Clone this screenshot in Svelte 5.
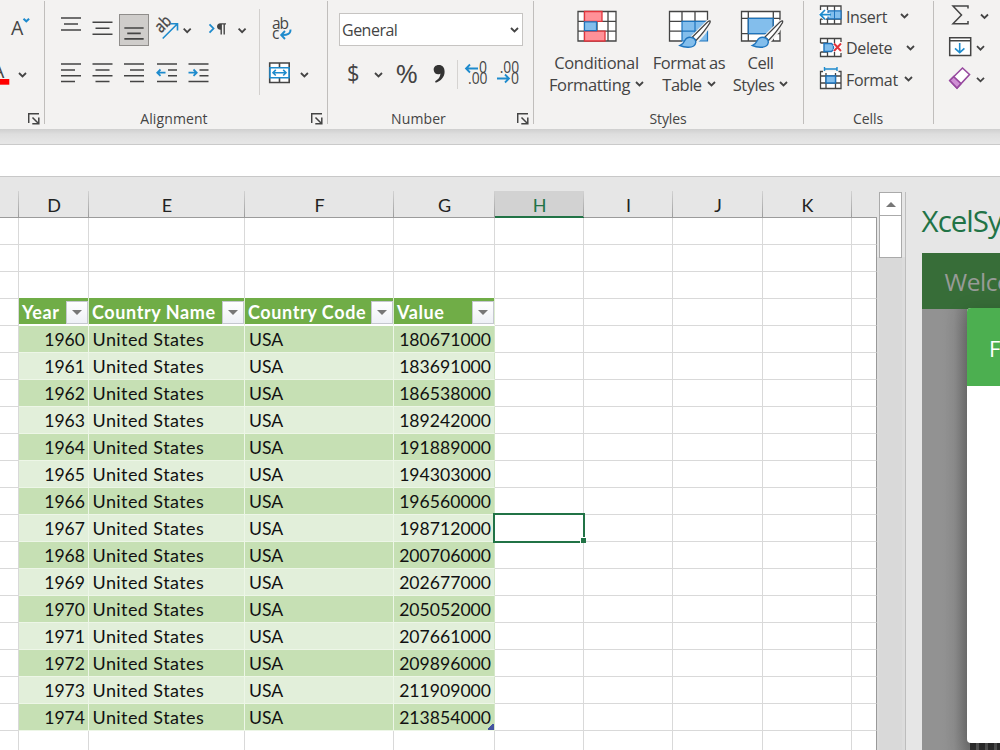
<script>
  const columns = [
    { name: '', w: 19 },
    { name: 'D', w: 70 },
    { name: 'E', w: 156 },
    { name: 'F', w: 149 },
    { name: 'G', w: 101 },
    { name: 'H', w: 89, active: true },
    { name: 'I', w: 89 },
    { name: 'J', w: 90 },
    { name: 'K', w: 89 },
    { name: '', w: 25 }
  ];
  const template = columns.map((c) => c.w + 'px').join(' ');
  const fields = ['Year', 'Country Name', 'Country Code', 'Value'];
  const values = [
    180671000, 183691000, 186538000, 189242000, 191889000, 194303000, 196560000, 198712000,
    200706000, 202677000, 205052000, 207661000, 209896000, 211909000, 213854000
  ];
  const records = values.map((value, i) => ({ year: 1960 + i, value }));
  const blank = [0, 1, 2];
  const tail = [5, 6, 7, 8, 9];
</script>

{#snippet chevron()}
  <svg class="chev" viewBox="0 0 9 6" width="9" height="6"><path d="M1 1 4.500 4.500 8 1" /></svg>
{/snippet}

{#snippet launcher()}
  <svg class="launch" viewBox="28 113 12 12" width="12" height="12">
    <path d="M28.7 123v-9.3H39M32.5 117.5l6 6M38.8 117.5v6.3h-6.5" />
  </svg>
{/snippet}

{#snippet brush()}
  <path d="M693.500 37.500 709 22q3-2 2.200.8Q707 31 697.500 41Z" fill="#fff" stroke="#f3f2f1" stroke-width="4" />
  <path d="M693.500 37 708.500 22q3.500-2.500 2.500.6Q706 31 697 40.500Z" fill="#fff" stroke="#444" stroke-width="1.200" />
  <path d="M681 45.500q3-1 4.500-4.500 2.500-4.500 7-3.500 4.500 1 4.300 5-.8 5-8 4.800-4.500-.3-7.800-1.800Z" fill="#83beec" stroke="#1e74bd" stroke-width="1.400" />
{/snippet}

<div class="app">
  <header class="ribbon">
    <section class="group font">
      <div class="body">
        <svg viewBox="0 8 44 40" width="44" height="40">
          <text x="11" y="35" font-size="19.500">A</text>
          <path class="blue" stroke-width="2" d="m23.500 18.700 2.800 2.600 2.800-2.600" />
        </svg>
        <svg viewBox="0 48 44 48" width="44" height="48">
          <text x="-8" y="78" font-size="19.500">A</text>
          <rect x="0" y="79" width="9.300" height="5.700" fill="#f00" />
          <path class="chevp" d="m19 73 3.500 3.500 3.500-3.500" />
        </svg>
      </div>
      <footer><span></span>{@render launcher()}</footer>
    </section>

    <section class="group align">
      <div class="body split">
        <div class="tools">
          <div class="line">
            <svg viewBox="55 8 32 40" width="32" height="40"><path class="ink" d="M61 18h20M64 24h14M61 30h20" /></svg>
            <svg viewBox="87 8 32 40" width="32" height="40"><path class="ink" d="M92.500 22.300h20M95.500 28.300h14M92.500 34.300h20" /></svg>
            <svg class="pressed" viewBox="119.500 15 29 31" width="31" height="33"><path class="ink" d="M124 28.500h20M127 34h14M124 39.700h20" /></svg>
            <svg viewBox="150 8 50 40" width="50" height="40">
              <text class="firm" x="0" y="0" font-size="16.500" transform="translate(161 33.500) rotate(-45)" textLength="16" lengthAdjust="spacingAndGlyphs">ab</text>
              <path class="blue" stroke-width="1.600" d="m162.700 38.500 14.500-14.500M170.800 23.800h6.700v6.700" />
              <path class="chevp" d="m183.700 28.700 3.500 3.500 3.500-3.500" />
            </svg>
            <svg viewBox="200 8 55 40" width="55" height="40">
              <path class="blue" stroke-width="1.800" d="m209.500 24.300 4 4.200-4 4.200" />
              <path d="M226 23.300h-5.500q-3.500.3-3.500 3.200t3.500 3.300v4.700h1.400V24.600h1.600v9.900h1.400v-9.900h1.100Z" fill="#444" />
              <path class="chevp" d="m238.600 28.700 3.500 3.500 3.500-3.500" />
            </svg>
          </div>
          <div class="line low">
            <svg viewBox="55 48 32 48" width="32" height="48"><path class="ink" d="M61 64h20M61 70h14M61 75.800h20M61 81.500h14" /></svg>
            <svg viewBox="87 48 32 48" width="32" height="48"><path class="ink" d="M92.500 64h20M95.500 70h14M92.500 75.800h20M95.500 81.500h14" /></svg>
            <svg viewBox="119 48 32 48" width="32" height="48"><path class="ink" d="M124 64h20M130 70h14M124 75.800h20M130 81.500h14" /></svg>
            <svg viewBox="151 48 32 48" width="32" height="48">
              <path class="ink" d="M157 64h20M168 70h9M168 75.800h9M157 81.500h20" />
              <path class="blue" stroke-width="1.800" d="M165.500 72.700h-8M160.500 69.500l-3.200 3.200 3.200 3.200" />
            </svg>
            <svg viewBox="183 48 32 48" width="32" height="48">
              <path class="ink" d="M188.500 64h20M199.500 70h9M199.500 75.800h9M188.500 81.500h20" />
              <path class="blue" stroke-width="1.800" d="M188.500 72.700h8M193.500 69.500l3.200 3.200-3.200 3.200" />
            </svg>
          </div>
        </div>
        <div class="rule"></div>
        <div class="tools">
          <svg viewBox="260 8 60 40" width="60" height="40">
            <text x="272" y="28.500" font-size="15.500" textLength="17">ab</text>
            <text x="272" y="38.500" font-size="15.500">c</text>
            <path class="blue" stroke-width="1.900" d="M290.500 29.500q.3 6-9 5.500M285 31l-3.800 4 3.800 4" />
          </svg>
          <svg viewBox="260 48 60 48" width="60" height="48">
            <path d="M269.700 63h19.500v19.500h-19.500ZM279.500 63v5M279.500 78v5" fill="#fff" stroke="#444" stroke-width="1.600" />
            <path d="M270 67.700h19v10h-19Z" fill="#fff" stroke="#1e8bcd" stroke-width="1.600" />
            <path class="blue" stroke-width="1.600" d="M273 72.700h13M275.800 69.900l-2.800 2.800 2.800 2.800M283.200 69.900l2.800 2.800-2.800 2.800" />
            <path class="chevp" d="m300.900 73 3.500 3.500 3.500-3.500" />
          </svg>
        </div>
      </div>
      <footer><span>Alignment</span>{@render launcher()}</footer>
    </section>

    <section class="group number">
      <div class="body">
        <div class="select"><span>General</span>{@render chevron()}</div>
        <svg viewBox="328 48 204 48" width="204" height="48">
          <text x="347" y="81.500" font-size="24" textLength="12.500" lengthAdjust="spacingAndGlyphs">$</text>
          <path class="chevp" d="m375 73 3.500 3.500 3.500-3.500" />
          <text x="395.500" y="82.500" font-size="25.500" textLength="22.500" lengthAdjust="spacingAndGlyphs">%</text>
          <path d="M438.900 65c-3.600 0-5.400 2.300-5.200 5 .2 3 2.600 4.600 5.200 4.200.9-.1 1.300-.3 1.600-.6-.2 3.600-2.400 6.300-5.400 7.600l.6 1.500c5.200-1.600 8.900-5.800 8.900-11 0-4.300-2.200-6.700-5.700-6.700Z" fill="#333" />
          <path d="M457.500 60v29" stroke="#d5d3d1" fill="none" />
          <text x="479" y="72.800" font-size="15.500" textLength="8" lengthAdjust="spacingAndGlyphs">0</text>
          <text x="468" y="83.500" font-size="15.500" textLength="19.500" lengthAdjust="spacingAndGlyphs">.00</text>
          <path class="blue" stroke-width="1.800" d="M478 68.500h-12M470 64.500l-4 4 4 4" />
          <text x="499.700" y="72.800" font-size="15.500" textLength="19.500" lengthAdjust="spacingAndGlyphs">.00</text>
          <text x="511" y="83.500" font-size="15.500" textLength="8" lengthAdjust="spacingAndGlyphs">0</text>
          <path class="blue" stroke-width="1.800" d="M497 78.500h12M505 74.500l4 4-4 4" />
        </svg>
      </div>
      <footer><span>Number</span>{@render launcher()}</footer>
    </section>

    <section class="group styles">
      <div class="body bigs">
        <div class="big" style:width="111px">
          <svg viewBox="572.500 8 50 42" width="50" height="42">
            <path d="M578.500 11.500h38v29.500h-38Z" fill="#fff" />
            <path class="grid" d="M578.500 11.500h38v29.500h-38ZM578.500 21.300h38M578.500 31.200h38M585 11v30M597.500 11v30M608.500 11v30" />
            <path d="M585 11.500h17.500v9.800H585ZM585 31.200h20.500v9.800h-20.500Z" fill="#ff9198" stroke="#e0343c" stroke-width="1.300" />
            <path d="M585 21.900h12v8.700h-12Z" fill="#83beec" stroke="#1e74bd" stroke-width="1.200" />
          </svg>
          <b style:letter-spacing="-.32px">Conditional</b>
          <b style:letter-spacing="-.35px">Formatting {@render chevron()}</b>
        </div>
        <div class="big" style:width="74px">
          <svg viewBox="665 8 50 42" width="50" height="42">
            <path d="M670.500 11.500h38v29.500h-38Z" fill="#fff" />
            <path d="M683 21.300h25.500v19.700H683Z" fill="#83beec" />
            <path class="grid" d="M708.500 21V11.500h-38v29.500H683M670.500 21.300h38M670.500 31.200h13M683 11v11M696 11v11" />
            <path d="M683 41V21.300h25.500V41ZM683 31.200h25M696 21v20" fill="none" stroke="#1e74bd" stroke-width="1.200" />
            {@render brush()}
          </svg>
          <b style:letter-spacing="-.5px">Format as</b>
          <b style:letter-spacing="-.5px">Table {@render chevron()}</b>
        </div>
        <div class="big" style:width="69px">
          <svg viewBox="736 8 50 42" width="50" height="42">
            <path d="M741.500 11.500h38.500v29.500h-38.500Z" fill="#fff" />
            <path d="M748.300 18.300h25v15.400h-25Z" fill="#83beec" />
            <path class="grid" d="M741.500 11.500H780v29.500h-38.500ZM741.500 18.300H780M741.500 33.700H780M748.300 11v30M773.300 11v30" />
            <path d="M748.300 18.300h25v15.400h-25Z" fill="none" stroke="#1e74bd" stroke-width="1.200" />
            <g transform="translate(71.500 0)">{@render brush()}</g>
          </svg>
          <b style:letter-spacing="-.5px">Cell</b>
          <b style:letter-spacing="-.5px">Styles {@render chevron()}</b>
        </div>
      </div>
      <footer><span>Styles</span></footer>
    </section>

    <section class="group cells">
      <div class="body rows">
        <div class="item">
          <svg viewBox="819 3 24 26" width="24" height="26">
            <path d="M820.500 6H841v18h-20.500Z" fill="#fff" />
            <path class="grid" d="M820.500 10V6H841v18h-20.500v-5M827.500 6v4M834.500 6v18M827.500 19v5M820.500 19H841" />
            <path d="M828 10.800h13v8h-13Z" fill="#83beec" stroke="#1e74bd" stroke-width="1.200" />
            <path d="M834.500 11v8" stroke="#1e74bd" />
            <path d="M830 14.700h-9M825.500 10l-5 4.700 5 4.700" fill="none" stroke="#fff" stroke-width="3.500" />
            <path class="blue" stroke-width="1.700" d="M831 14.700h-10.500M825 10l-4.700 4.700 4.700 4.700" />
          </svg>
          <b style:width="54px">Insert</b>{@render chevron()}
        </div>
        <div class="item">
          <svg viewBox="819 34 24 26" width="24" height="26">
            <path d="M820.500 37.500H841v18h-20.500Z" fill="#fff" />
            <path class="grid" d="M820.500 42v-4.500H841V41M820.500 51v4.500H841V52M827.500 37v18M834.500 37v5M834.500 51v4M820.500 42h7M820.500 51h7" />
            <path d="M824 42.500h7.500l2 2v4l-2 2H824Z" fill="#83beec" stroke="#1e74bd" stroke-width="1.400" />
            <path d="m834.500 43 6.500 7M841 43l-6.500 7" fill="none" stroke="#fff" stroke-width="4" />
            <path d="m834 42.500 7 7.500M841 42.500l-7 7.500" fill="none" stroke="#e0343c" stroke-width="1.900" />
          </svg>
          <b style:width="60px">Delete</b>{@render chevron()}
        </div>
        <div class="item">
          <svg viewBox="819 66 24 26" width="24" height="26">
            <path d="M820.500 71.500H841v17h-20.500Z" fill="#fff" />
            <path class="grid" d="M823 71.500h-2.500v17H841v-17h-2.500M820.500 76H841M820.500 83H841M826 73v15.500M835.500 73v15.500" />
            <path d="M826 76h9.500v7H826Z" fill="#83beec" stroke="#1e74bd" stroke-width="1.400" />
            <path class="blue" stroke-width="1.400" d="M824.500 69h12.500M824.500 67v4M837 67v4" />
          </svg>
          <b style:width="58px">Format</b>{@render chevron()}
        </div>
      </div>
      <footer><span>Cells</span></footer>
    </section>

    <section class="group edit">
      <div class="body">
        <svg viewBox="934 0 66 96" width="66" height="96">
          <path d="M968 8.500V6h-15l8.500 9-8.500 8.700h15V21" fill="none" stroke="#444" stroke-width="1.500" />
          <path class="chevp" d="m981 14.500 3.500 3.500 3.500-3.500M977 46.200l3.500 3.500 3.500-3.500M977 77.800l3.500 3.500 3.500-3.500" />
          <path d="M949.700 37.800h21v17.600h-21ZM949.700 40.700h21" fill="#fff" stroke="#444" stroke-width="1.500" />
          <path class="blue" stroke-width="1.600" d="M959.700 43v9.500M955 48.300l4.700 4.400 4.700-4.400" />
          <path d="m949.800 80.500 12.700-12.500 7 6.500-12.500 13.500Z" fill="#fff" stroke="#97499f" stroke-width="1.600" />
          <path d="m949.800 80.500 3.900-3.900 7.300 7-4 4.400Z" fill="#cf8fd4" stroke="#97499f" stroke-width="1.600" />
        </svg>
      </div>
    </section>
  </header>
  <div class="shade"></div>
  <div class="formula"></div>

  <main>
    <div class="sheet">
      <div class="heads" style:grid-template-columns={template}>
        {#each columns as c}<div class:active={c.active}>{c.name}</div>{/each}
      </div>
      {#each blank as _}
        <div class="row" style:grid-template-columns={template}>
          {#each columns as _c}<div></div>{/each}
        </div>
      {/each}
      <div class="row" style:grid-template-columns={template}>
        <div></div>
        {#each fields as f}
          <div class="field"><span>{f}</span><i></i></div>
        {/each}
        {#each tail as _}<div></div>{/each}
      </div>
      {#each records as r, i}
        <div class="row" class:odd={i % 2} style:grid-template-columns={template}>
          <div></div>
          <div class="data num">{r.year}</div>
          <div class="data country">United States</div>
          <div class="data">USA</div>
          <div class="data num last" class:corner={i === records.length - 1}>{r.value}</div>
          {#each tail as t}<div class:cursor={i === 7 && t === 5}></div>{/each}
        </div>
      {/each}
      <div class="row" style:grid-template-columns={template}>
        {#each columns as _c}<div></div>{/each}
      </div>
    </div>
    <div class="scroll">
      <div class="up"><svg viewBox="0 0 12 7" width="12" height="7"><path d="M1 6 6 1l5 5Z" fill="#777" /></svg></div>
      <div class="thumb"></div>
      <div class="track"></div>
    </div>
    <aside>
      <h1>XcelSy</h1>
      <div class="pane">
        <div class="banner">Welcome</div>
        <div class="stripes"></div>
        <div class="modal"><div class="mhead">F</div></div>
      </div>
    </aside>
  </main>
</div>

<style>
  :global(body) { overflow: hidden; }
  .app {
    width: 1000px; height: 750px; overflow: hidden; display: flex; flex-direction: column;
    font-family: 'Open Sans', 'Noto Sans', sans-serif; color: #444; background: #e6e6e6;
  }
  svg { display: block; flex: none; overflow: hidden; }
  svg text { fill: #444; }
  svg .firm { stroke: #444; stroke-width: .35; }
  .ribbon { display: flex; height: 129px; flex: none; background: #f3f2f1; }
  .group { display: flex; flex-direction: column; box-sizing: border-box; flex: none; position: relative; }
  .group::after { content: ''; position: absolute; right: 0; top: 1px; height: 123px; width: 1px; background: #c0bebc; }
  .font { width: 45px; }
  .align { width: 283px; }
  .number { width: 206px; }
  .styles { width: 270px; }
  .cells { width: 130px; }
  .edit { width: 66px; }
  .edit::after { display: none; }
  .body { height: 108px; padding-top: 8px; box-sizing: border-box; }
  .edit .body { padding-top: 0; }
  .split { display: flex; padding-left: 10px; }
  .tools { display: flex; flex-direction: column; }
  .line { display: flex; width: 204px; height: 40px; }
  .low { height: 48px; }
  .pressed { box-sizing: border-box; margin: 6px 1px 0 0; width: 30px; height: 32px; border: 1px solid #8f8d8b; background: #cfcdcb; }
  .rule { width: 1px; height: 86px; background: #d2d0ce; margin: 1px 0 0; }
  .ink { stroke: #444; stroke-width: 1.6; fill: none; }
  .blue { stroke: #1e8bcd; fill: none; }
  .grid { stroke: #444; stroke-width: 1.3; fill: none; }
  .chevp, .chev path { stroke: #444; stroke-width: 1.8; fill: none; }
  .launch path { stroke: #444; stroke-width: 1.5; fill: none; }
  footer { height: 21px; display: grid; place-items: center; font-size: 14px; line-height: 20px; padding-right: 25px; position: relative; letter-spacing: .1px; }
  .styles footer, .cells footer { padding-right: 2px; letter-spacing: -.1px; }
  footer .launch { position: absolute; right: 5px; top: 5px; }
  .select {
    margin: 5px 0 2px 11px; width: 184px; height: 33px; box-sizing: border-box; border: 1px solid #c6c4c2; background: #fff;
    display: flex; align-items: center; justify-content: space-between; padding: 1px 3px 0 2px; font-size: 16px; letter-spacing: -.5px;
  }
  .bigs { display: flex; padding-left: 7px; }
  .big { display: flex; flex-direction: column; align-items: center; }
  b { font-weight: 400; font-size: 16.5px; line-height: 22px; white-space: nowrap; }
  .big b { display: flex; align-items: center; gap: 5px; }
  .big svg.chev { margin-top: -2px; }
  .big > svg { margin-bottom: 2px; }
  .rows { display: flex; flex-direction: column; padding: 3px 0 0 15px; gap: 5.500px; }
  .item { display: flex; align-items: center; height: 26px; font-size: 16px; }
  .item b { margin-left: 3px; font-size: 16px; letter-spacing: -.35px; padding-top: 1px; }
  .shade { height: 15px; flex: none; background: linear-gradient(#cfcfcf, #dedede 35%, #e6e6e6 90%); border-bottom: 1px solid #cacaca; }
  .formula { height: 31px; flex: none; background: #fff; border-bottom: 1px solid #c8c8c8; }

  main { display: flex; flex: 1; min-height: 0; }
  .sheet { width: 877px; flex: none; font-family: Lato, 'Open Sans', sans-serif; color: #111; overflow: hidden; }
  .heads { display: grid; height: 41px; box-sizing: border-box; padding-top: 14px; border-bottom: 1px solid #9b9b9b; background: #e6e6e6; }
  .heads div { text-align: center; font-size: 18px; line-height: 28px; height: 26px; box-sizing: border-box; padding-left: 1px; border-right: 1px solid; border-image: linear-gradient(#d4d4d4, #9b9b9b) 1; color: #222; }
  .heads div:last-child { border: 0; }
  .heads .active { background: #d2d2d2; color: #217346; box-shadow: inset 0 -1px #217346, 0 1px #217346; }
  .row { display: grid; height: 27px; background: #fff; }
  .row > div { border: solid #d9d9d9; border-width: 0 1px 1px 0; box-sizing: border-box; height: 27px; position: relative; }
  .row > div:last-child { border-right-color: #999; }
  .row > .field {
    background: #70ad47; border-color: #dcecd0; border-bottom: 2px solid #fff; height: 28px; margin-top: -1px;
    display: flex; justify-content: space-between; align-items: flex-end; padding-left: 3px; color: #fff; font-weight: 700; font-size: 18px; letter-spacing: .6px;
  }
  .field span { line-height: 23px; white-space: nowrap; }
  .field i { width: 20px; height: 21px; flex: none; background: linear-gradient(#fff, #eef0f6); border: 1px solid #c5c8cf; display: grid; place-items: center; }
  .field i::after { content: ''; border: 5px solid transparent; border-top-color: #777; border-bottom: 0; }
  .row > .data { background: #c6e0b4; border-color: #edf6e7; font-size: 17.6px; line-height: 27px; padding: 0 4px; white-space: nowrap; }
  .row > .country { font-size: 18px; letter-spacing: .42px; padding-left: 3.5px; }
  .odd > .data { background: #e2efda; }
  .row > .num { text-align: right; padding: 0 3px 0 0; }
  .row > .last { border-right-color: #d4e6c8; }
  .corner::after { content: ''; position: absolute; right: 0; bottom: 0; width: 6px; height: 6px; background: linear-gradient(135deg, transparent 40%, #4454a0 40%); }
  .cursor::before { content: ''; position: absolute; z-index: 2; left: -2px; top: -2px; width: 88px; height: 26px; border: 2px solid #217346; }
  .cursor::after { content: ''; position: absolute; z-index: 3; right: -3px; bottom: -2px; width: 5px; height: 5px; background: #217346; border: 1px solid #fff; border-width: 1px 0 0 1px; }

  .scroll { width: 28px; flex: none; padding: 15px 3px 0 2px; box-sizing: border-box; display: flex; flex-direction: column; background: linear-gradient(#e6e6e6 80px, #dcdcdc 80px); }
  .up { height: 24px; box-sizing: border-box; border: 1px solid #aaa; background: #fff; display: grid; place-items: center; flex: none; }
  .thumb { height: 42px; box-sizing: border-box; border: 1px solid #aaa; border-top: 0; background: #fff; flex: none; }
  .track { flex: 1; background: #d9d9d9; }
  aside { width: 95px; box-sizing: border-box; padding-left: 15.6px; overflow: hidden; border-left: 1px solid #bdbdbd; margin-top: 15px; }
  h1 { margin: 0; height: 61px; font-size: 29.5px; line-height: 57px; font-weight: 400; letter-spacing: -1px; color: #217346; white-space: nowrap; }
  .pane { position: relative; height: 497px; width: 79px; overflow: hidden; background: linear-gradient(90deg, #929292 20px, #8d8d8d 32px, #777 46px); }
  .banner { height: 56px; line-height: 58px; padding-left: 23px; font-size: 24.500px; letter-spacing: -.5px; color: #979b97; background: #376d38; }
  .stripes { position: absolute; left: 48px; right: 0; bottom: 0; height: 10px; background: repeating-linear-gradient(90deg, #303030 0 6px, #5a5a5a 6px 9px); }
  .modal { position: absolute; left: 45.5px; top: 55px; width: 200px; height: 435px; background: #fff; border-radius: 4px; overflow: hidden; box-shadow: 0 6px 20px rgba(0, 0, 0, .25); }
  .mhead { height: 78px; line-height: 80px; padding-left: 22px; font-size: 22px; color: #fff; background: #4caf50; }
</style>
